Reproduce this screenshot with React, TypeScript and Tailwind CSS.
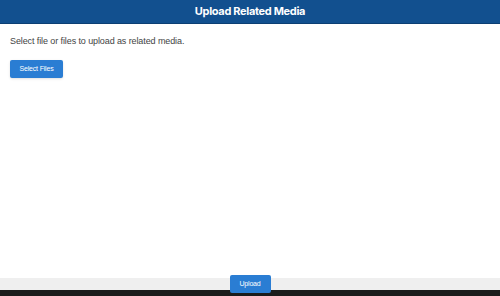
export default function App() {
  return (
    <div className="flex h-[296px] w-[500px] flex-col overflow-hidden bg-white font-['Liberation_Sans',Arial,sans-serif]">
      {/* Header */}
      <header className="flex h-6 shrink-0 items-center justify-center border-b border-[#0c3f73] bg-[#12508f]">
        <h1 className="font-['Inter',sans-serif] text-[11px] font-bold tracking-[-0.03em] text-white">Upload Related Media</h1>
      </header>

      {/* Body */}
      <main className="flex-1 px-[10px] pt-[12px]">
        <p className="text-[9px] leading-[11px] tracking-[-0.1px] text-[#444]">Select file or files to upload as related media.</p>
        <button className="mt-[13px] flex h-[18px] w-[53px] items-center justify-center rounded-[2px] bg-[#2a7dd3] text-[7px] tracking-tight text-white shadow-sm">
          Select Files
        </button>
      </main>

      {/* Footer */}
      <footer className="flex h-3 shrink-0 items-center justify-center bg-[#efefef]">
        <button className="relative z-10 flex h-[18px] w-[41px] items-center justify-center rounded-[2px] bg-[#2a7dd3] text-[7px] tracking-tight text-white">
          Upload
        </button>
      </footer>
      <div className="h-[6px] shrink-0 bg-[#1b1b1b]" />
    </div>
  );
}
